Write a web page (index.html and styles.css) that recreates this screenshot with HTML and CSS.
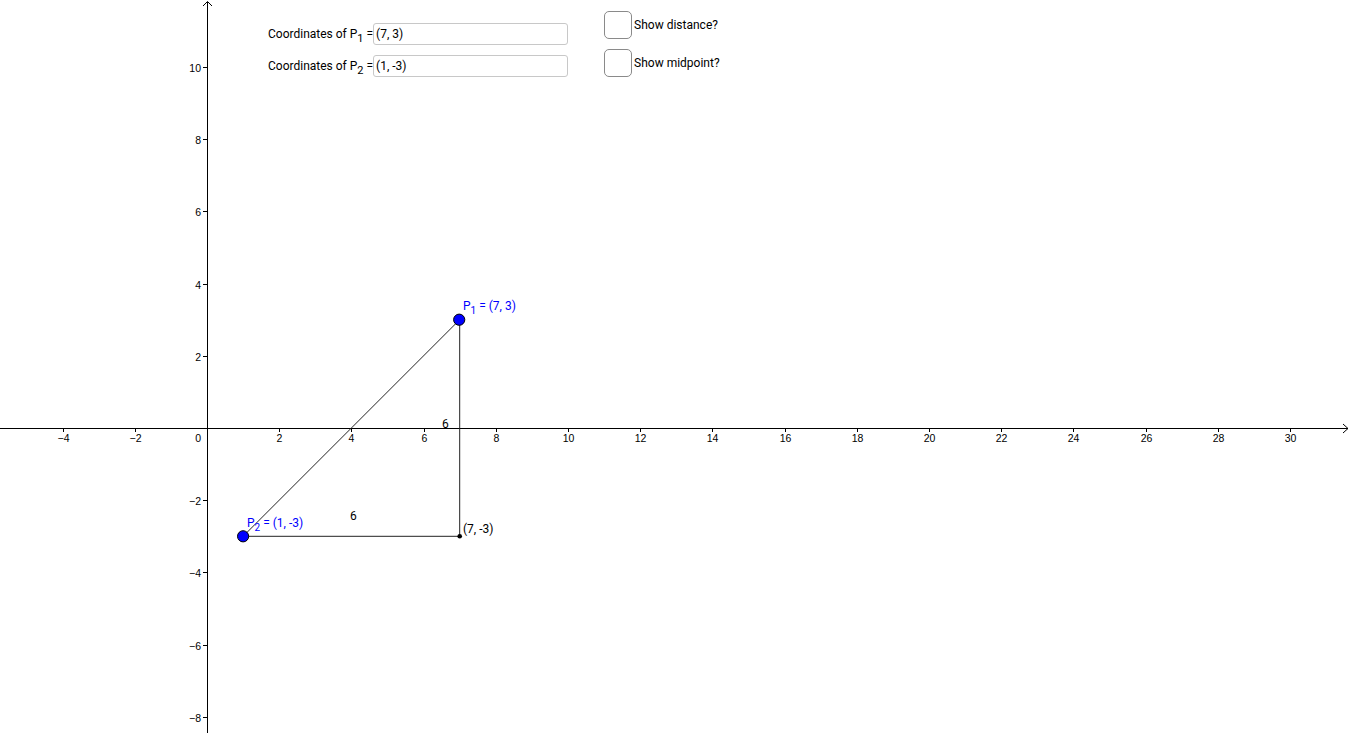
FILE: index.html
```html
<!DOCTYPE html>
<html>
<head>
<meta charset="utf-8">
<link rel="stylesheet" href="styles.css">
</head>
<body>
<div class="applet">
  <svg class="graph" width="1351" height="733" viewBox="0 0 1351 733" xmlns="http://www.w3.org/2000/svg">
    <g class="axes" stroke="#000" stroke-width="1" fill="none">
      <line x1="0" y1="428.5" x2="1348" y2="428.5"/>
      <polyline points="1343,424 1348,428.5 1343,433"/>
      <line x1="207.5" y1="2" x2="207.5" y2="733"/>
      <polyline points="203,6 207.5,1.5 212,6"/>
    </g>
    <g id="xticks" stroke="#000" stroke-width="1"></g>
    <g id="xlabels" class="ticklabel" text-anchor="middle"></g>
    <g id="yticks" stroke="#000" stroke-width="1"></g>
    <g id="ylabels" class="ticklabel" text-anchor="end"></g>
    <text class="ticklabel" x="201" y="442" text-anchor="end">0</text>

    <g stroke="#222" stroke-width="1">
      <line x1="243.1" y1="536.3" x2="459.7" y2="319.7"/>
      <line x1="459.7" y1="319.7" x2="459.7" y2="536.3"/>
      <line x1="243.1" y1="536.3" x2="459.7" y2="536.3"/>
    </g>
    <circle cx="459.7" cy="536.3" r="2.3" fill="#000"/>
    <circle cx="459.2" cy="319.7" r="5.6" fill="#0000ff" stroke="#000" stroke-width="1"/>
    <circle cx="243.1" cy="536.3" r="5.6" fill="#0000ff" stroke="#000" stroke-width="1"/>

    <text class="plabel" x="463" y="310">P<tspan class="sub" dy="4">1</tspan><tspan dy="-4"> = (7, 3)</tspan></text>
    <text class="plabel" x="247" y="527">P<tspan class="sub" dy="4">2</tspan><tspan dy="-4"> = (1, -3)</tspan></text>
    <text class="blabel" x="463" y="533">(7, -3)</text>
    <text class="blabel" x="442" y="428">6</text>
    <text class="blabel" x="350" y="520">6</text>
  </svg>

  <div class="controls">
    <div class="inputs">
      <div class="field">
        <span class="flabel">Coordinates of P<sub>1</sub> =</span>
        <div class="box">(7, 3)</div>
      </div>
      <div class="field">
        <span class="flabel">Coordinates of P<sub>2</sub> =</span>
        <div class="box">(1, -3)</div>
      </div>
    </div>
    <div class="checks">
      <div class="check"><span class="cb"></span><span>Show distance?</span></div>
      <div class="check"><span class="cb"></span><span>Show midpoint?</span></div>
    </div>
  </div>
</div>
<script>
(function(){
  var ns="http://www.w3.org/2000/svg", s=36.1, ox=207.5, oy=428.5;
  var xt=document.getElementById('xticks'), xl=document.getElementById('xlabels');
  var yt=document.getElementById('yticks'), yl=document.getElementById('ylabels');
  function lab(g,x,y,t){var e=document.createElementNS(ns,'text');e.setAttribute('x',x);e.setAttribute('y',y);e.textContent=t;g.appendChild(e);}
  function tick(g,x1,y1,x2,y2){var e=document.createElementNS(ns,'line');e.setAttribute('x1',x1);e.setAttribute('y1',y1);e.setAttribute('x2',x2);e.setAttribute('y2',y2);g.appendChild(e);}
  for(var k=-4;k<=30;k+=2){ if(k===0)continue; var x=Math.round(ox+k*s-0.5)+0.5;
    tick(xt,x,428,x,432); lab(xl,x,442,(k<0?'\u2212':'')+Math.abs(k)); }
  for(var k=-8;k<=10;k+=2){ if(k===0)continue; var y=Math.round(oy-k*s-0.5)+0.5;
    tick(yt,203,y,207,y); lab(yl,201,y+4,(k<0?'\u2212':'')+Math.abs(k)); }
})();
</script>
</body>
</html>
```
FILE: styles.css
```css
html, body {
  margin: 0;
  padding: 0;
  background: #fff;
}
.applet {
  position: relative;
  width: 1351px;
  height: 733px;
  overflow: hidden;
  font-family: Roboto, "Liberation Sans", sans-serif;
}
.graph {
  position: absolute;
  left: 0;
  top: 0;
  display: block;
}
.ticklabel {
  font-family: "Liberation Sans", Arial, sans-serif;
  font-size: 10.5px;
  fill: #000;
}
.plabel {
  font-family: Roboto, "Liberation Sans", sans-serif;
  font-size: 12px;
  fill: #0000ff;
}
.plabel .sub {
  font-size: 10px;
}
.blabel {
  font-family: Roboto, "Liberation Sans", sans-serif;
  font-size: 12px;
  fill: #000;
}
.controls {
  position: absolute;
  left: 268px;
  top: 11px;
  display: flex;
  gap: 37px;
}
.inputs {
  display: flex;
  flex-direction: column;
  gap: 9px;
  padding-top: 11px;
}
.field {
  display: flex;
  align-items: center;
  font-size: 12px;
  color: #000;
  height: 22px;
  padding-top: 1px;
}
.flabel {
  white-space: nowrap;
  margin-right: 0;
}
.flabel sub {
  font-size: 11px;
  vertical-align: -4px;
  line-height: 0;
}
.box {
  width: 191px;
  height: 20px;
  border: 1px solid #c8c8c8;
  border-radius: 3px;
  box-sizing: content-box;
  padding-left: 2px;
  line-height: 20px;
  font-size: 12px;
}
.checks {
  display: flex;
  flex-direction: column;
  gap: 10px;
  margin-left: -1px;
}
.check {
  display: flex;
  align-items: flex-start;
  font-size: 12px;
  color: #000;
  gap: 2px;
}
.check span:last-child {
  margin-top: 7px;
}
.cb {
  width: 26px;
  height: 26px;
  border: 1px solid #8a8a8a;
  border-radius: 5px;
  display: inline-block;
}
```
